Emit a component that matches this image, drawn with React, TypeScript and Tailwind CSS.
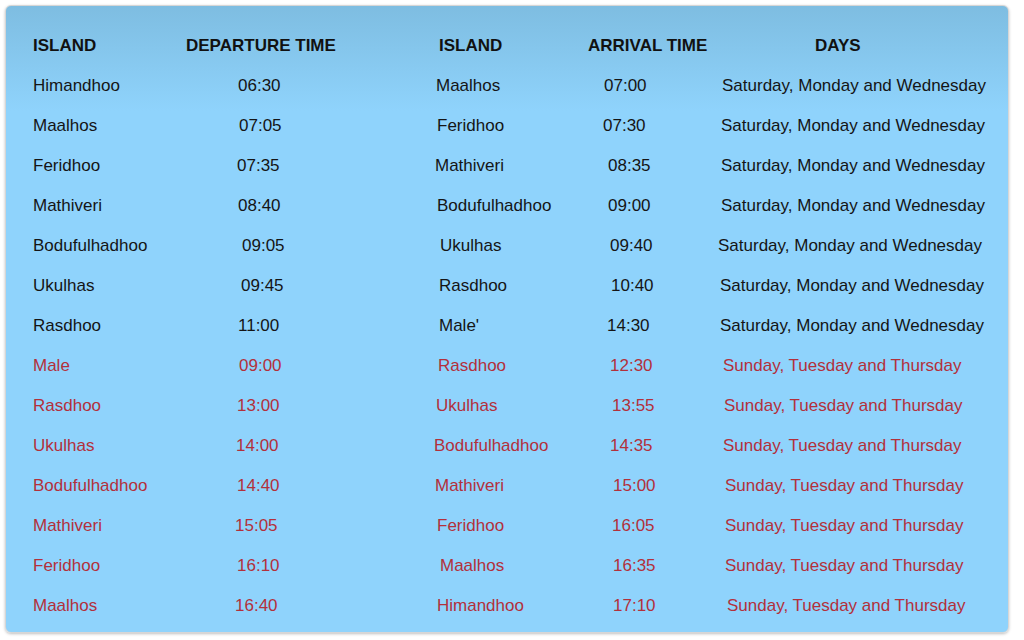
type Cell = [string, number];

// column starts (page x) — cell text is nudged inside its column by data offset
const cols = [
  { start: 6, w: "w-[154px]" },
  { start: 160, w: "w-[250px]" },
  { start: 410, w: "w-[160px]" },
  { start: 570, w: "w-[130px]" },
  { start: 700, w: "flex-1" },
];

const header: Cell[] = [
  ["ISLAND", 33],
  ["DEPARTURE TIME", 186],
  ["ISLAND", 439],
  ["ARRIVAL TIME", 588],
  ["DAYS", 815],
];

const SAT = "Saturday, Monday and Wednesday";
const SUN = "Sunday, Tuesday and Thursday";

const rows: { red: boolean; cells: Cell[] }[] = [
  { red: false, cells: [["Himandhoo", 33], ["06:30", 238], ["Maalhos", 436], ["07:00", 604], [SAT, 722]] },
  { red: false, cells: [["Maalhos", 33], ["07:05", 239], ["Feridhoo", 437], ["07:30", 603], [SAT, 721]] },
  { red: false, cells: [["Feridhoo", 33], ["07:35", 237], ["Mathiveri", 435], ["08:35", 608], [SAT, 721]] },
  { red: false, cells: [["Mathiveri", 33], ["08:40", 238], ["Bodufulhadhoo", 437], ["09:00", 608], [SAT, 721]] },
  { red: false, cells: [["Bodufulhadhoo", 33], ["09:05", 242], ["Ukulhas", 440], ["09:40", 610], [SAT, 718]] },
  { red: false, cells: [["Ukulhas", 33], ["09:45", 241], ["Rasdhoo", 439], ["10:40", 611], [SAT, 720]] },
  { red: false, cells: [["Rasdhoo", 33], ["11:00", 238], ["Male'", 439], ["14:30", 607], [SAT, 720]] },
  { red: true, cells: [["Male", 33], ["09:00", 239], ["Rasdhoo", 438], ["12:30", 610], [SUN, 723]] },
  { red: true, cells: [["Rasdhoo", 33], ["13:00", 237], ["Ukulhas", 436], ["13:55", 612], [SUN, 724]] },
  { red: true, cells: [["Ukulhas", 33], ["14:00", 236], ["Bodufulhadhoo", 434], ["14:35", 610], [SUN, 723]] },
  { red: true, cells: [["Bodufulhadhoo", 33], ["14:40", 237], ["Mathiveri", 435], ["15:00", 613], [SUN, 725]] },
  { red: true, cells: [["Mathiveri", 33], ["15:05", 235], ["Feridhoo", 437], ["16:05", 612], [SUN, 725]] },
  { red: true, cells: [["Feridhoo", 33], ["16:10", 237], ["Maalhos", 440], ["16:35", 613], [SUN, 725]] },
  { red: true, cells: [["Maalhos", 33], ["16:40", 235], ["Himandhoo", 437], ["17:10", 613], [SUN, 727]] },
];

const Row = ({ cells, className }: { cells: Cell[]; className: string }) => (
  <div className={`flex items-center ${className}`}>
    {cells.map(([text, x], i) => (
      <div key={i} className={`${cols[i].w} shrink-0 whitespace-nowrap`}>
        <span style={{ marginLeft: x - cols[i].start }}>{text}</span>
      </div>
    ))}
  </div>
);

export default function App() {
  return (
    <div className="h-[640px] w-[1024px] bg-white pl-[5px] pt-[5px] font-['Liberation_Sans',Arial,sans-serif] text-[17px]">
      <div className="h-[628px] w-[1004px] rounded-[6px] border border-[#d6d6d6] bg-[linear-gradient(to_bottom,#7ebde1_0px,#8fd3fc_105px,#8fd3fc_100%)] pt-[19px] shadow-[0_1px_3px_rgba(0,0,0,0.25)]">
        <Row cells={header} className="h-[41px] font-bold text-[#111]" />
        {rows.map((r, i) => (
          <Row key={i} cells={r.cells} className={`h-10 ${r.red ? "text-[#b3303b]" : "text-[#151515]"}`} />
        ))}
      </div>
    </div>
  );
}
